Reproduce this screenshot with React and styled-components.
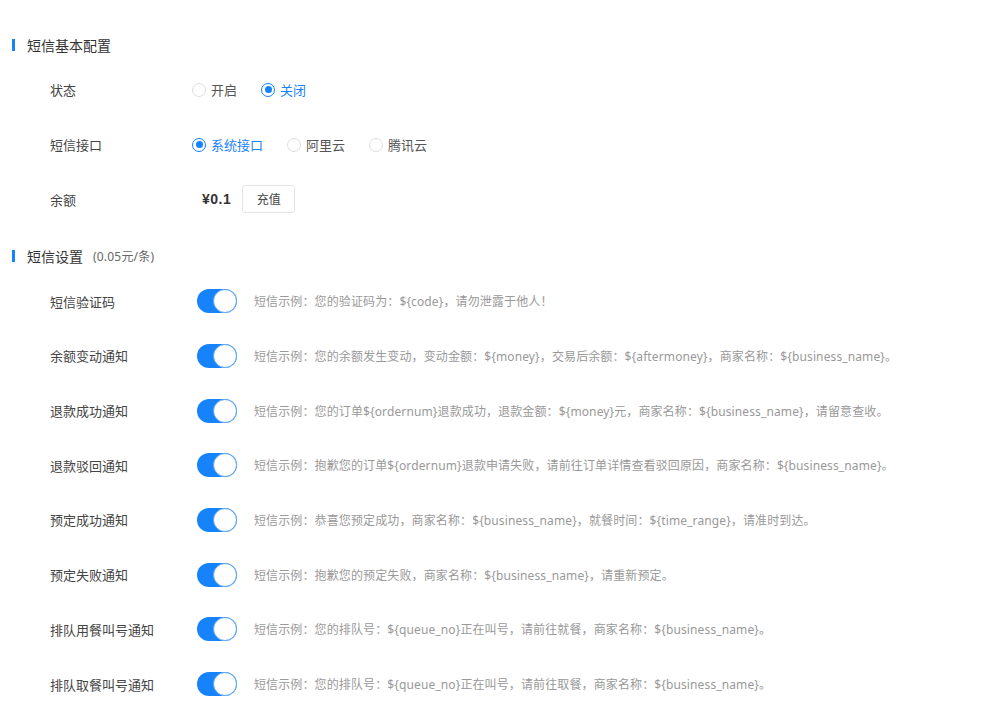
import React, { useState } from "react";
import styled, { createGlobalStyle } from "styled-components";

const GlobalStyle = createGlobalStyle`
  html, body { margin: 0; padding: 0; background: #fff; }
  body {
    font-family: "Noto Sans", "Noto Sans CJK SC", sans-serif;
    color: #333;
  }
`;

const BLUE = "#1783fa";

const Page = styled.div`
  padding: 33px 0 0 12px;
  width: 1000px;
  box-sizing: border-box;
`;

const Section = styled.section`
  & + & { margin-top: 17.6px; }
`;

const SectionTitle = styled.h2`
  margin: 0 0 5.6px;
  height: 24px;
  display: flex;
  align-items: center;
  font-size: 14px;
  font-weight: normal;
  color: #333;
  &::before {
    content: "";
    width: 3px;
    height: 12px;
    background: ${BLUE};
    margin-right: 12px;
  }
`;

const TitleNote = styled.span`
  font-size: 12px;
  color: #666;
  margin-left: 10px;
  letter-spacing: 0.2px;
`;

const Row = styled.div`
  height: 54.7px;
  display: grid;
  grid-template-columns: 142px 1fr;
  align-items: center;
  padding-left: 38px;
`;

const Label = styled.div`
  font-size: 13px;
  color: #444;
`;

const Controls = styled.div`
  display: flex;
  align-items: center;
`;

const RadioOption = styled.label`
  display: inline-flex;
  align-items: center;
  margin-right: 24px;
  font-size: 13px;
  color: ${(p) => (p.$checked ? BLUE : "#555")};
  cursor: pointer;
`;

const RadioDot = styled.span`
  width: 14px;
  height: 14px;
  box-sizing: border-box;
  border-radius: 50%;
  border: 1px solid ${(p) => (p.$checked ? BLUE : "#dcdee2")};
  margin-right: 5px;
  position: relative;
  &::after {
    content: "";
    display: ${(p) => (p.$checked ? "block" : "none")};
    position: absolute;
    left: 2.5px;
    top: 2.5px;
    width: 7px;
    height: 7px;
    border-radius: 50%;
    background: ${BLUE};
  }
`;

const Amount = styled.span`
  margin-left: 10px;
  font-size: 14px;
  font-weight: bold;
  color: #333;
  letter-spacing: 0.5px;
  font-family: "Liberation Sans", "Noto Sans CJK SC", sans-serif;
`;

const PlainButton = styled.button`
  margin-left: 11px;
  width: 53px;
  height: 28px;
  border: 1px solid #e3e5e8;
  border-radius: 3px;
  background: #fff;
  font-size: 12px;
  color: #444;
  font-family: inherit;
  padding: 0;
  cursor: pointer;
`;

const SwitchTrack = styled.button`
  margin-left: 5px;
  width: 40px;
  height: 24px;
  padding: 0;
  border: none;
  border-radius: 12px;
  background: ${(p) => (p.$on ? BLUE : "#ddd")};
  position: relative;
  cursor: pointer;
  flex: none;
  &::after {
    content: "";
    position: absolute;
    top: 0;
    left: ${(p) => (p.$on ? "16px" : "0")};
    width: 24px;
    height: 24px;
    box-sizing: border-box;
    border-radius: 50%;
    background: #fff;
    border: 1px solid ${(p) => (p.$on ? "#5fa6f6" : "#ccc")};
  }
`;

const Example = styled.span`
  margin-left: 17px;
  font-size: 12px;
  color: #999;
  letter-spacing: 0.12px;
  white-space: nowrap;
`;

function RadioGroup({ options, value, onChange }) {
  return (
    <Controls>
      {options.map((o) => (
        <RadioOption key={o} $checked={o === value} onClick={() => onChange(o)}>
          <RadioDot $checked={o === value} />
          {o}
        </RadioOption>
      ))}
    </Controls>
  );
}

const notices = [
  ["短信验证码", "短信示例：您的验证码为：${code}，请勿泄露于他人！"],
  ["余额变动通知", "短信示例：您的余额发生变动，变动金额：${money}，交易后余额：${aftermoney}，商家名称：${business_name}。"],
  ["退款成功通知", "短信示例：您的订单${ordernum}退款成功，退款金额：${money}元，商家名称：${business_name}，请留意查收。"],
  ["退款驳回通知", "短信示例：抱歉您的订单${ordernum}退款申请失败，请前往订单详情查看驳回原因，商家名称：${business_name}。"],
  ["预定成功通知", "短信示例：恭喜您预定成功，商家名称：${business_name}，就餐时间：${time_range}，请准时到达。"],
  ["预定失败通知", "短信示例：抱歉您的预定失败，商家名称：${business_name}，请重新预定。"],
  ["排队用餐叫号通知", "短信示例：您的排队号：${queue_no}正在叫号，请前往就餐，商家名称：${business_name}。"],
  ["排队取餐叫号通知", "短信示例：您的排队号：${queue_no}正在叫号，请前往取餐，商家名称：${business_name}。"],
];

export default function App() {
  const [status, setStatus] = useState("关闭");
  const [api, setApi] = useState("系统接口");
  const [switches, setSwitches] = useState(notices.map(() => true));

  return (
    <Page>
      <GlobalStyle />
      <Section>
        <SectionTitle>短信基本配置</SectionTitle>
        <Row>
          <Label>状态</Label>
          <RadioGroup options={["开启", "关闭"]} value={status} onChange={setStatus} />
        </Row>
        <Row>
          <Label>短信接口</Label>
          <RadioGroup options={["系统接口", "阿里云", "腾讯云"]} value={api} onChange={setApi} />
        </Row>
        <Row>
          <Label>余额</Label>
          <Controls>
            <Amount>¥0.1</Amount>
            <PlainButton>充值</PlainButton>
          </Controls>
        </Row>
      </Section>
      <Section>
        <SectionTitle>
          短信设置<TitleNote>(0.05元/条)</TitleNote>
        </SectionTitle>
        {notices.map(([name, text], i) => (
          <Row key={name}>
            <Label>{name}</Label>
            <Controls>
              <SwitchTrack
                $on={switches[i]}
                onClick={() => setSwitches((s) => s.map((v, j) => (j === i ? !v : v)))}
              />
              <Example>{text}</Example>
            </Controls>
          </Row>
        ))}
      </Section>
    </Page>
  );
}
